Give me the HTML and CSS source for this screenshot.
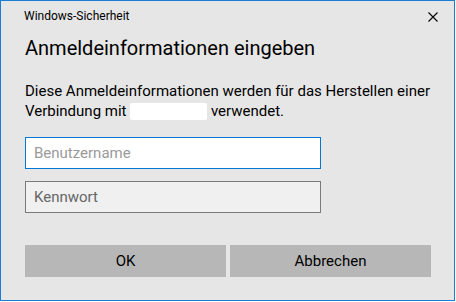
FILE: index.html
```html
<!DOCTYPE html>
<html lang="de">
<head>
    <meta charset="UTF-8">
    <meta name="viewport" content="width=device-width, initial-scale=1.0">
    <title>Windows-Sicherheit</title>
    <link rel="stylesheet" href="styles.css">
</head>
<body>

<div class="window">
    <div class="titlebar">
        <span class="title">Windows-Sicherheit</span>
        <svg class="close" width="10" height="10" viewBox="0 0 10 10">
            <path d="M0.5 0.5 L9.5 9.5 M9.5 0.5 L0.5 9.5" stroke="#000" stroke-width="1.1" fill="none"/>
        </svg>
    </div>

    <div class="content">
        <h1>Anmeldeinformationen eingeben</h1>
        <p class="info">Diese Anmeldeinformationen werden für das Herstellen einer<br>Verbindung mit <span class="hidden-host"></span> verwendet.</p>

        <input type="text" class="field focused" placeholder="Benutzername">
        <input type="password" class="field" placeholder="Kennwort">

        <div class="buttons">
            <button>OK</button>
            <button>Abbrechen</button>
        </div>
    </div>
</div>

</body>
</html>
```

FILE: styles.css
```css
body {
    margin: 0;
    background: #fff;
    font-family: Roboto, "Noto Sans", sans-serif;
    color: #000;
}
.window {
    box-sizing: border-box;
    width: 455px;
    height: 301px;
    border: 1px solid #1a7fd4;
    background: #e6e6e6;
}
.titlebar {
    display: flex;
    justify-content: space-between;
    align-items: flex-start;
    height: 31px;
    box-sizing: border-box;
    padding: 7px 16px 0 23px;
}
.title {
    font-size: 12px;
    line-height: 16px;
}
.close {
    margin-top: 4px;
}
.content {
    padding-left: 24px;
}
h1 {
    font-size: 20px;
    font-weight: normal;
    line-height: 28px;
    margin: 2px 0 0;
}
.info {
    font-size: 15px;
    line-height: 20px;
    margin: 19px 0 0;
}
.hidden-host {
    display: inline-block;
    width: 77px;
    height: 17px;
    vertical-align: -4px;
    background: #fff;
    border-radius: 2px;
}
.field {
    display: block;
    box-sizing: border-box;
    width: 296px;
    height: 32px;
    margin: 12px 0 0;
    padding: 0 8px;
    border: 1px solid #7a7a7a;
    background: #f0f0f0;
    font-family: Roboto, "Noto Sans", sans-serif;
    font-size: 15px;
    color: #000;
    outline: none;
}
.field::placeholder {
    color: #666;
}
.field.focused {
    margin-top: 16px;
    border-color: #0078d7;
    background: #fff;
}
.field.focused::placeholder {
    color: #9a9a9a;
}
.buttons {
    display: flex;
    gap: 4px;
    margin-top: 32px;
}
.buttons button {
    width: 201px;
    height: 32px;
    border: none;
    background: #b7b7b7;
    font-family: Roboto, "Noto Sans", sans-serif;
    font-size: 15px;
    color: #000;
    padding: 0;
}
```
